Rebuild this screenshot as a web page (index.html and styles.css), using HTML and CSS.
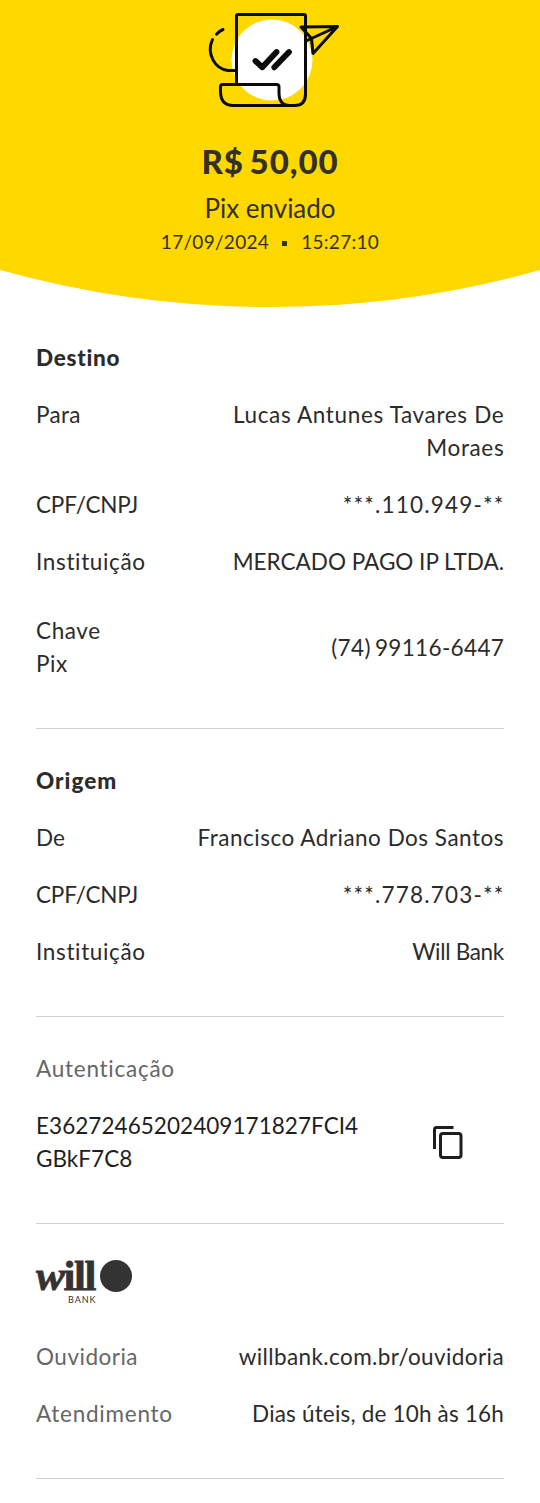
FILE: index.html
```html
<!DOCTYPE html>
<html lang="pt-BR">
<head>
<meta charset="utf-8">
<title>Comprovante Pix</title>
<link rel="stylesheet" href="styles.css">
</head>
<body>
<header class="hero">
  <svg class="hero-bg" viewBox="0 0 540 307" aria-hidden="true"><path d="M0 0H540V270A1003.6 1003.6 0 0 1 0 270Z"/></svg>
  <svg class="receipt-icon" viewBox="0 0 160 120" aria-hidden="true">
    <circle cx="77" cy="60" r="40.500" fill="#fff"/>
    <g fill="none" stroke="#0b0b0b" stroke-width="3" stroke-linecap="round" stroke-linejoin="round">
      <path d="M41.500 83.500V16q0-1.500 1.500-1.500H109q1.500 0 1.500 1.500V94q0 11.500-11 11.500H38.500Q25.500 105.500 25.500 91.500V86.500q0-2 2-2H81.500q2.500 0 2.500 2.500v5.500Q84 105.500 94.500 105.500"/>
      <path d="M40 70.500H33C20 69 11 54 17.500 39.500M21.500 34.200Q24.500 31 28 29.500"/>
      <path d="M106 27 142.500 26.500 118 53.500 116.500 38.500Z M142.500 26.500 112 40.500"/>
    </g>
    <path d="M60.500 61 67.300 67.300 81.500 52M79.300 67.300 94 52" fill="none" stroke="#0b0b0b" stroke-width="5.800" stroke-linecap="round" stroke-linejoin="round"/>
  </svg>
  <h1 class="amount">R$ 50,00</h1>
  <p class="status">Pix enviado</p>
  <p class="date"><span>17/09/2024</span><i class="dot"></i><span>15:27:10</span></p>
</header>
<main class="content">
  <section class="section first">
    <h2 class="title">Destino</h2>
    <div class="row"><span class="para">Para</span><span class="value name">Lucas Antunes Tavares De<br>Moraes</span></div>
    <div class="row"><span class="cpf">CPF/CNPJ</span><span class="value doc">***.110.949-**</span></div>
    <div class="row"><span class="inst">Instituição</span><span class="value">MERCADO PAGO IP LTDA.</span></div>
    <div class="row key-row"><span class="key">Chave<br>Pix</span><span class="value phone">(74) 99116-6447</span></div>
  </section>
  <section class="section">
    <h2 class="title origin">Origem</h2>
    <div class="row"><span>De</span><span class="value sender">Francisco Adriano Dos Santos</span></div>
    <div class="row"><span class="cpf">CPF/CNPJ</span><span class="value doc">***.778.703-**</span></div>
    <div class="row"><span class="inst">Instituição</span><span class="value will">Will Bank</span></div>
  </section>
  <section class="section">
    <div class="muted auth">Autenticação</div>
    <div class="row code-row"><span class="code">E36272465202409171827FCI4<br>GBkF7C8</span>
      <svg class="copy" viewBox="0 0 32 36" aria-hidden="true"><path d="M2.500 25V5.500q0-2 2-2H21.500"/><rect x="8.500" y="9.500" width="20.500" height="24" rx="2.500"/></svg>
    </div>
  </section>
  <section class="section">
    <svg class="logo" viewBox="0 0 100 48" role="img" aria-label="will bank">
      <text class="logo-word" y="31"><tspan class="logo-w" x="0">w</tspan><tspan x="27.500 38 48.500">ill</tspan></text>
      <circle cx="80" cy="17" r="16"/>
      <text class="logo-bank" x="32" y="44" textLength="27.500">BANK</text>
    </svg>
    <div class="row"><span class="muted ouv">Ouvidoria</span><span class="value site">willbank.com.br/ouvidoria</span></div>
    <div class="row"><span class="muted atend">Atendimento</span><span class="value hours">Dias úteis, de 10h às 16h</span></div>
  </section>
</main>
</body>
</html>
```
FILE: styles.css
```css
* { box-sizing: border-box; }
body { margin: 0; background: #fff; color: #2b2b2b; font: 22.500px/33px Lato, "Noto Sans", sans-serif; font-variant-ligatures: none; }
h1, h2, p { margin: 0; }
.hero { position: relative; height: 307px; display: flex; flex-direction: column; align-items: center; color: #333127; }
.hero-bg { position: absolute; inset: 0; width: 540px; height: 307px; z-index: -1; fill: #ffd800; }
.receipt-icon { width: 160px; height: 120px; margin-left: 10px; }
.amount { margin-top: 21px; font-size: 33px; line-height: 40px; font-weight: 900; letter-spacing: .9px; word-spacing: -3px; }
.status { margin-top: 10px; font-size: 26px; line-height: 34px; }
.date { display: flex; align-items: center; font-size: 19px; line-height: 34px; letter-spacing: .3px; }
.dot { width: 5px; height: 5px; margin: 3px 14px 0 13px; background: currentColor; }
.content { padding: 0 36px; }
.section { display: flex; flex-direction: column; gap: 24px; padding: 35px 0 48px; border-bottom: 1px solid #d0d0d0; }
.section.first { padding-top: 34px; }
.title { font-size: 22.500px; line-height: 33px; font-weight: 900; letter-spacing: .75px; }
.title.origin { letter-spacing: 1px; }
.row { display: flex; justify-content: space-between; align-items: flex-start; white-space: nowrap; }
.key-row { align-items: center; margin-top: 12px; }
.value { text-align: right; }
.muted { color: #666; }
.code-row { align-items: center; padding-right: 40px; color: #1e1e1e; }
.copy { width: 32px; height: 36px; fill: none; stroke: #1e1e1e; stroke-width: 3; }

/* Tracking per field */
.para { letter-spacing: .3px; }
.name { letter-spacing: .65px; margin-right: -.3px; }
.cpf { letter-spacing: -.2px; }
.doc { letter-spacing: 1.200px; margin-right: -.6px; }
.inst { letter-spacing: .65px; }
.key { letter-spacing: .6px; }
.phone { letter-spacing: .35px; word-spacing: -2px; margin-right: -.2px; }
.sender { letter-spacing: .5px; }
.will { letter-spacing: -.3px; }
.auth { letter-spacing: .75px; }
.code { letter-spacing: .05px; }
.ouv { letter-spacing: .5px; }
.atend { letter-spacing: .75px; }
.site { letter-spacing: .4px; }
.hours { letter-spacing: .18px; }

.logo { width: 100px; height: 48px; margin: 0 0 9px; fill: #333; overflow: visible; }
.logo-word { font: bold 43px "Liberation Serif", serif; stroke: #333; stroke-width: .8px; }
.logo-w { font-style: italic; }
.logo-bank { font: 9px Lato, sans-serif; }
```
